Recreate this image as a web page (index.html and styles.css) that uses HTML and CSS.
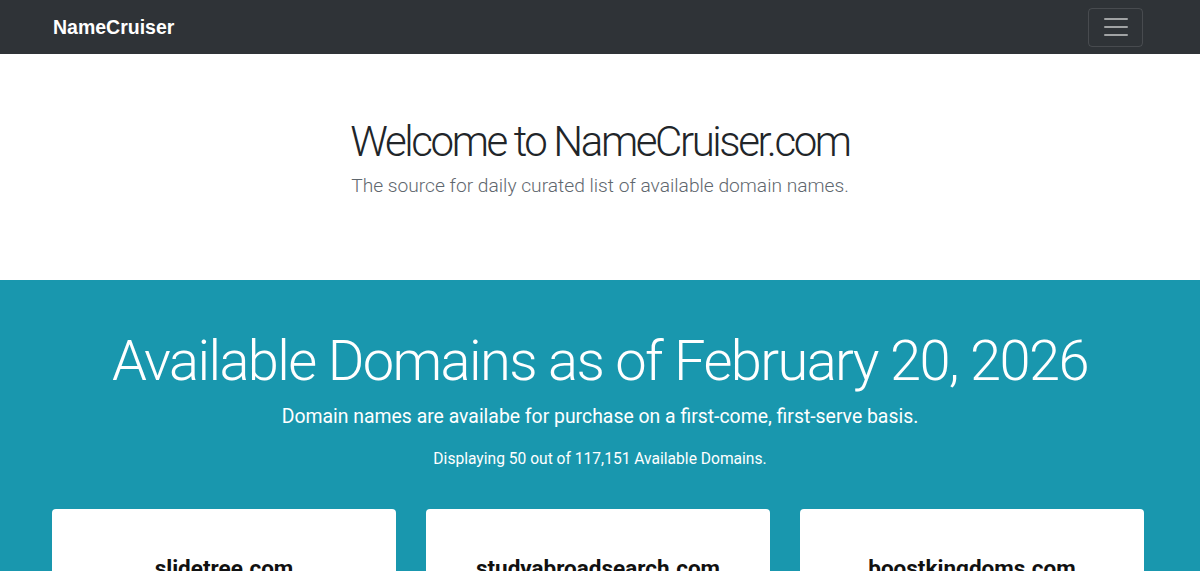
FILE: index.html
```html
<!DOCTYPE html>
<html lang="en">
<head>
  <meta charset="UTF-8">
  <meta name="viewport" content="width=device-width, initial-scale=1.0">
  <title>NameCruiser - Available Domains</title>
  <link rel="stylesheet" href="styles.css">
</head>
<body>
  <header class="navbar">
    <div class="container nav-inner">
      <a class="brand" href="#">NameCruiser</a>
      <button class="toggler" aria-label="Toggle navigation">
        <svg width="30" height="30" viewBox="0 0 30 30">
          <path d="M4 7h22M4 15h22M4 23h22" stroke="rgba(255,255,255,0.55)" stroke-width="2" stroke-linecap="round"/>
        </svg>
      </button>
    </div>
  </header>

  <section class="intro">
    <h1>Welcome to NameCruiser.com</h1>
    <p class="lead">The source for daily curated list of available domain names.</p>
  </section>

  <section class="domains">
    <h2>Available Domains as of February 20, 2026</h2>
    <p class="sub">Domain names are availabe for purchase on a first-come, first-serve basis.</p>
    <p class="count">Displaying 50 out of 117,151 Available Domains.</p>

    <div class="container grid">
      <div class="card"><h3>slidetree.com</h3></div>
      <div class="card"><h3>studyabroadsearch.com</h3></div>
      <div class="card"><h3>boostkingdoms.com</h3></div>
    </div>
  </section>
</body>
</html>
```

FILE: styles.css
```css
body {
  margin: 0;
  font-family: Roboto, "Liberation Sans", sans-serif;
  color: #212529;
  background-color: #fff;
}
.container {
  margin: 0 56px 0 52px;
}
.navbar {
  background-color: #2f3337;
  height: 54px;
}
.nav-inner {
  height: 100%;
  display: flex;
  justify-content: space-between;
  align-items: center;
}
.brand {
  margin-left: 1px;
  color: #fff;
  font-family: "Liberation Sans", Arial, sans-serif;
  font-weight: bold;
  font-size: 19.5px;
  text-decoration: none;
}
.toggler {
  width: 55px;
  height: 39px;
  margin-right: 1px;
  display: flex;
  align-items: center;
  justify-content: center;
  background: none;
  border: 1px solid rgba(255, 255, 255, 0.12);
  border-radius: 4px;
  padding: 0;
  cursor: pointer;
}
.intro {
  height: 226px;
  box-sizing: border-box;
  padding-top: 62px;
  text-align: center;
}
.intro h1 {
  margin: 0;
  font-size: 42px;
  font-weight: 300;
  line-height: 1.22;
  letter-spacing: -2.4px;
}
.intro .lead {
  margin: 7px 0 0;
  font-size: 19.2px;
  font-weight: 300;
  color: #5f676e;
}
.domains {
  background-color: #1997ae;
  color: #fff;
  text-align: center;
  padding-top: 48px;
}
.domains h2 {
  margin: 0;
  font-size: 56px;
  font-weight: 300;
  line-height: 1.2;
  letter-spacing: -1.6px;
}
.domains .sub {
  margin: 10px 0 0;
  font-size: 19.4px;
}
.domains .count {
  margin: 22px 0 0;
  font-size: 15.6px;
}
.grid {
  display: grid;
  grid-template-columns: repeat(3, 1fr);
  gap: 30px;
  margin-top: 41px;
  padding-bottom: 40px;
}
.card {
  background-color: #fff;
  border-radius: 4px;
  color: #111;
  padding: 46px 20px 60px;
}
.card h3 {
  margin: 0;
  font-size: 22.5px;
  font-weight: 700;
}
```
